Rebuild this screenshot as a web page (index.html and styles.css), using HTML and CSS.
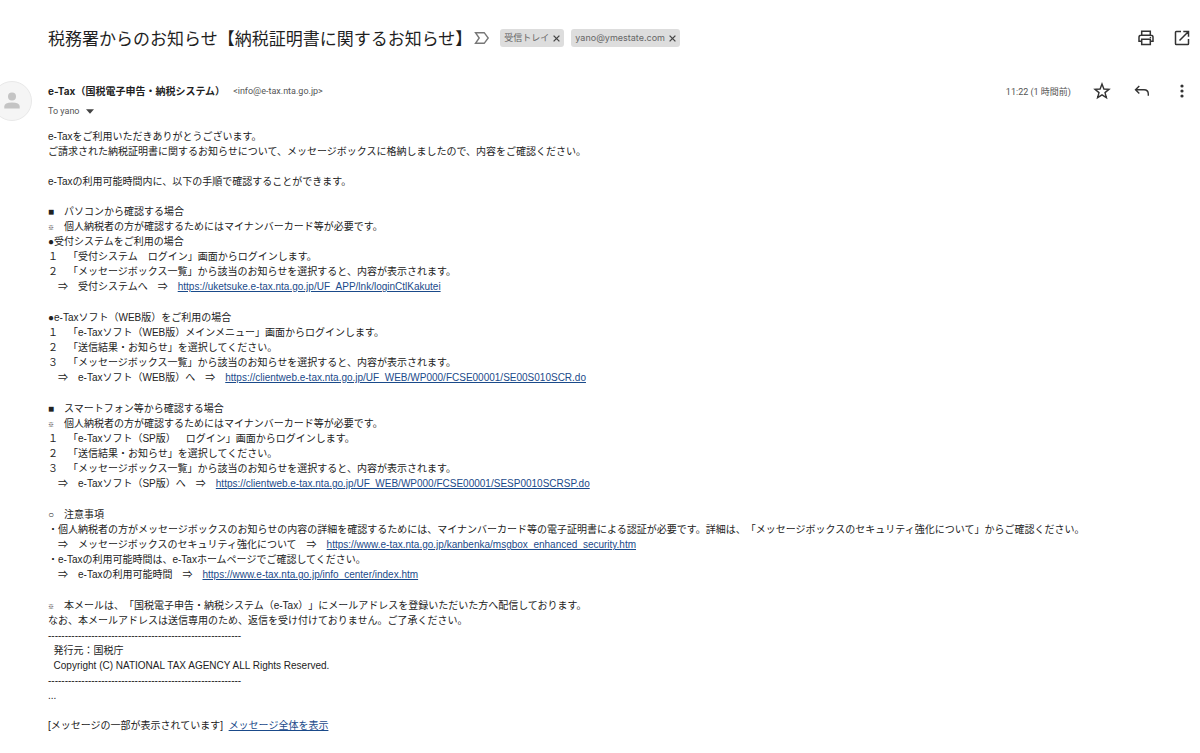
FILE: index.html
```html
<!DOCTYPE html>
<html lang="ja">
<head>
<meta charset="utf-8">
<title>税務署からのお知らせ</title>
<link rel="stylesheet" href="styles.css">
</head>
<body>
<main class="mail">
  <header class="subject-bar">
    <h1 class="subject">税務署からのお知らせ【納税証明書に関するお知らせ】</h1>
    <button class="icon-btn important" aria-label="重要マーク"><svg width="16" height="14" viewBox="0 0 16 14"><path d="M1.5 1.7H10.2L14.2 7L10.2 12.3H1.5L5.2 7Z" fill="none" stroke="#777" stroke-width="1.4"/></svg></button>
    <ul class="labels">
      <li class="chip">受信トレイ <button class="icon-btn" aria-label="受信トレイを削除"><svg width="7" height="7" viewBox="0 0 7 7"><path d="M.6.6L6.4 6.4M6.4.6L.6 6.4" stroke="#444" stroke-width="1.3"/></svg></button></li>
      <li class="chip">yano@ymestate.com <button class="icon-btn" aria-label="yano@ymestate.comを削除"><svg width="7" height="7" viewBox="0 0 7 7"><path d="M.6.6L6.4 6.4M6.4.6L.6 6.4" stroke="#444" stroke-width="1.3"/></svg></button></li>
    </ul>
    <div class="subject-actions">
      <button class="icon-btn" aria-label="印刷"><svg width="18" height="18" viewBox="0 0 18 18" fill="none" stroke="#333" stroke-width="1.5"><path d="M4.7 6V2.3H13.3V6M4.7 12.2H2V8.2Q2 6.2 4 6.2H14Q16 6.2 16 8.2V12.2H13.3M4.7 10.3H13.3V15.5H4.7Z"/><circle cx="13.4" cy="8.5" r=".8" fill="#333" stroke="none"/></svg></button>
      <button class="icon-btn" aria-label="新しいウィンドウで開く"><svg width="18" height="18" viewBox="0 0 18 18" fill="none" stroke="#333" stroke-width="1.5"><path d="M8 2.5H3.3Q2.5 2.5 2.5 3.3V14.7Q2.5 15.5 3.3 15.5H14.7Q15.5 15.5 15.5 14.7V10M10.3 2.5H15.5V7.7M15.5 2.5L6.5 11.5"/></svg></button>
    </div>
  </header>

  <section class="sender-bar">
    <svg class="avatar" width="40" height="40" viewBox="0 0 40 40"><circle cx="20" cy="20" r="19.5" fill="#f5f5f5" stroke="#e8e8e8"/><circle cx="20" cy="15.5" r="4" fill="#c4c4c4"/><path d="M12.3 27.5V25.5Q12.3 21.5 20 21.5T27.7 25.5V27.5Z" fill="#c4c4c4"/></svg>
    <div class="sender">
      <div class="from"><strong class="name">e-Tax（国税電子申告・納税システム）</strong><span class="address">&lt;info@e-tax.nta.go.jp&gt;</span></div>
      <button class="recipient">To yano <svg width="8" height="5" viewBox="0 0 8 5"><path d="M0 .3H8L4 4.7Z" fill="#444"/></svg></button>
    </div>
    <div class="sender-actions">
      <time class="time">11:22 (1 時間前)</time>
      <button class="icon-btn" aria-label="スター"><svg width="18" height="18" viewBox="0 0 18 18"><path d="M9 2L10.9 7L16 7.3L12 10.6L13.4 15.7L9 12.8L4.6 15.7L6 10.6L2 7.3L7.1 7Z" fill="none" stroke="#333" stroke-width="1.4"/></svg></button>
      <button class="icon-btn" aria-label="返信"><svg width="18" height="18" viewBox="0 0 18 18"><path d="M6.3 4L2.5 7.8L6.3 11.6M2.5 7.8H11Q15.3 7.8 15.3 12V13.8" fill="none" stroke="#333" stroke-width="1.4"/></svg></button>
      <button class="icon-btn" aria-label="その他"><svg width="18" height="18" viewBox="0 0 18 18" fill="#333"><circle cx="9" cy="4" r="1.6"/><circle cx="9" cy="9" r="1.6"/><circle cx="9" cy="14" r="1.6"/></svg></button>
    </div>
  </section>

  <article class="message">
    <p>e-Taxをご利用いただきありがとうございます。<br>ご請求された納税証明書に関するお知らせについて、メッセージボックスに格納しましたので、内容をご確認ください。</p>
    <p>e-Taxの利用可能時間内に、以下の手順で確認することができます。</p>
    <p class="steps">■　パソコンから確認する場合<br><span class="note">※</span>　個人納税者の方が確認するためにはマイナンバーカード等が必要です。<br>●受付システムをご利用の場合<br>１　「受付システム　ログイン」画面からログインします。<br>２　「メッセージボックス一覧」から該当のお知らせを選択すると、内容が表示されます。<br>　⇒　受付システムへ　⇒　<a href="#">https://uketsuke.e-tax.nta.go.jp/UF_APP/lnk/loginCtlKakutei</a></p>
    <p class="steps">●e-Taxソフト（WEB版）をご利用の場合<br>１　「e-Taxソフト（WEB版）メインメニュー」画面からログインします。<br>２　「送信結果・お知らせ」を選択してください。<br>３　「メッセージボックス一覧」から該当のお知らせを選択すると、内容が表示されます。<br>　⇒　e-Taxソフト（WEB版）へ　⇒　<a href="#">https://clientweb.e-tax.nta.go.jp/UF_WEB/WP000/FCSE00001/SE00S010SCR.do</a></p>
    <p class="steps">■　スマートフォン等から確認する場合<br><span class="note">※</span>　個人納税者の方が確認するためにはマイナンバーカード等が必要です。<br>１　「e-Taxソフト（SP版）　ログイン」画面からログインします。<br>２　「送信結果・お知らせ」を選択してください。<br>３　「メッセージボックス一覧」から該当のお知らせを選択すると、内容が表示されます。<br>　⇒　e-Taxソフト（SP版）へ　⇒　<a href="#">https://clientweb.e-tax.nta.go.jp/UF_WEB/WP000/FCSE00001/SESP0010SCRSP.do</a></p>
    <p class="steps">○　注意事項<br>・個人納税者の方がメッセージボックスのお知らせの内容の詳細を確認するためには、マイナンバーカード等の電子証明書による認証が必要です。詳細は、「メッセージボックスのセキュリティ強化について」からご確認ください。<br>　⇒　メッセージボックスのセキュリティ強化について　⇒　<a href="#">https://www.e-tax.nta.go.jp/kanbenka/msgbox_enhanced_security.htm</a><br>・e-Taxの利用可能時間は、e-Taxホームページでご確認してください。<br>　⇒　e-Taxの利用可能時間　⇒　<a href="#">https://www.e-tax.nta.go.jp/info_center/index.htm</a></p>
    <p><span class="note">※</span>　本メールは、「国税電子申告・納税システム（e-Tax）」にメールアドレスを登録いただいた方へ配信しております。<br>なお、本メールアドレスは送信専用のため、返信を受け付けておりません。ご了承ください。<br>----------------------------------------------------------<br>&nbsp; 発行元：国税庁<br>&nbsp; Copyright (C) NATIONAL TAX AGENCY ALL Rights Reserved.<br>----------------------------------------------------------<br>...</p>
    <p>[メッセージの一部が表示されています]&nbsp; <a href="#">メッセージ全体を表示</a></p>
  </article>
</main>
</body>
</html>
```
FILE: styles.css
```css
* { box-sizing: border-box; }

body {
  margin: 0;
  background: #fff;
  color: #222;
  font-family: "Liberation Sans", "Noto Sans CJK JP", sans-serif;
  font-size: 10px;
  text-spacing-trim: space-all;
}

button {
  padding: 0;
  border: 0;
  background: none;
  color: inherit;
  font: inherit;
  cursor: pointer;
}

.icon-btn { display: flex; }

.mail { padding: 26px 9px 20px 48px; }

.subject-bar {
  display: flex;
  align-items: center;
  min-height: 24px;
}

.subject {
  margin: 0;
  color: #1f1f1f;
  font: 400 17px/24px "Noto Sans CJK JP", sans-serif;
}

.important { margin: 0 10px 0 2px; }

.labels {
  display: flex;
  gap: 7px;
  margin: 0;
  padding: 0;
  list-style: none;
}

.chip {
  display: flex;
  align-items: center;
  gap: 4px;
  height: 18px;
  padding: 0 4px;
  border-radius: 3px;
  background: #ddd;
  color: #666;
  font: 9px/18px Inter, "Noto Sans CJK JP", sans-serif;
}

.subject-actions {
  display: flex;
  gap: 18px;
  margin-left: auto;
}

.sender-bar {
  display: flex;
  align-items: flex-start;
  margin: 31px 0 8px -48px;
}

.avatar {
  flex: none;
  margin: 0 16px 0 -8px;
}

.sender {
  flex: 1;
  line-height: 20px;
}

.from {
  display: flex;
  gap: 8px;
}

.name {
  color: #1f1f1f;
  font-family: Inter, "Noto Sans CJK JP", sans-serif;
}

.address,
.recipient,
.time {
  color: #555;
  font-family: Roboto, "Noto Sans CJK JP", sans-serif;
  font-size: 9px;
}

.recipient {
  display: flex;
  align-items: center;
  gap: 6px;
  line-height: 20px;
}

.sender-actions {
  display: flex;
  align-items: center;
  gap: 22px;
  height: 20px;
}

.message { line-height: 15px; }

.message p { margin: 0 0 15px; }

.message .steps { margin-bottom: 16px; }

.note {
  font-size: 6px;
  line-height: 1;
}

a { color: #1a4a8a; }
```
